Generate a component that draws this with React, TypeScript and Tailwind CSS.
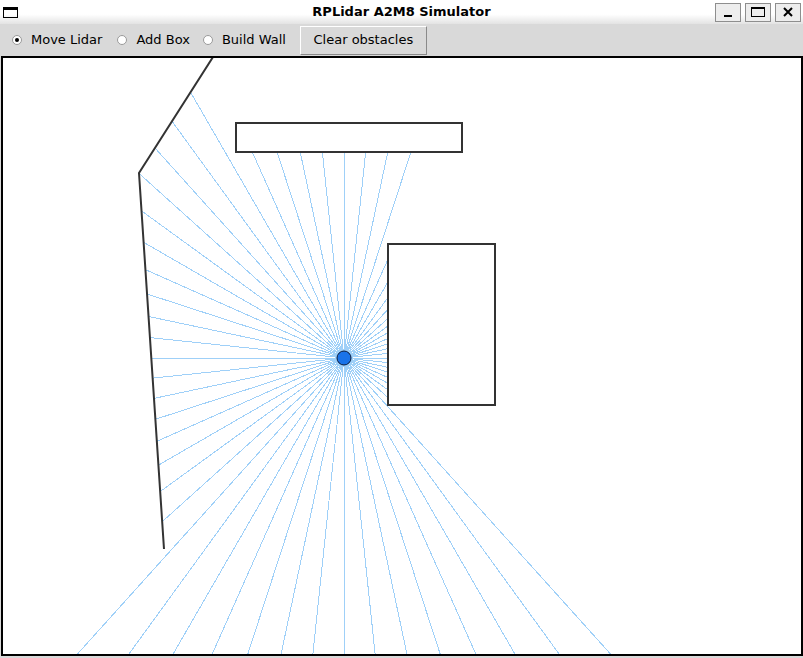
import { FC } from "react";

type Pt = [number, number];
type Seg = [Pt, Pt];

// page coordinates; the canvas inner area starts at (3, 58)
const LIDAR: Pt = [344, 358];
const BOUNDS = { x0: 3, y0: 58, x1: 800, y1: 654 };

const boxes: [number, number, number, number][] = [
  [236, 123, 462, 152],
  [388, 244, 495, 405],
];
const wall: Pt[] = [
  [213, 57],
  [139, 173],
  [164, 549],
];

const boxSegs = (b: [number, number, number, number]): Seg[] => {
  const [x0, y0, x1, y1] = b;
  return [
    [[x0, y0], [x1, y0]],
    [[x1, y0], [x1, y1]],
    [[x1, y1], [x0, y1]],
    [[x0, y1], [x0, y0]],
  ];
};

const segments: Seg[] = [
  ...boxes.flatMap(boxSegs),
  ...wall.slice(1).map((p, i) => [wall[i], p] as Seg),
];

const castRay = (deg: number): Pt => {
  const a = (deg * Math.PI) / 180;
  const dx = Math.cos(a);
  const dy = -Math.sin(a);
  const [px, py] = LIDAR;
  // distance to canvas edge
  let best = Infinity;
  if (dx > 1e-9) best = Math.min(best, (BOUNDS.x1 - px) / dx);
  if (dx < -1e-9) best = Math.min(best, (BOUNDS.x0 - px) / dx);
  if (dy > 1e-9) best = Math.min(best, (BOUNDS.y1 + 1 - py) / dy);
  if (dy < -1e-9) best = Math.min(best, (BOUNDS.y0 - py) / dy);
  for (const [[ax, ay], [bx, by]] of segments) {
    const ex = bx - ax;
    const ey = by - ay;
    const den = dx * ey - dy * ex;
    if (Math.abs(den) < 1e-9) continue;
    const t = ((ax - px) * ey - (ay - py) * ex) / den;
    const u = ((ax - px) * dy - (ay - py) * dx) / den;
    if (t > 0 && u >= 0 && u <= 1 && t < best) best = t;
  }
  return [px + dx * best, py + dy * best];
};

const rays = Array.from({ length: 60 }, (_, i) => castRay(i * 6));

const Radio: FC<{ label: string; checked?: boolean; className?: string }> = ({
  label,
  checked,
  className = "",
}) => (
  <div className={`flex items-center ${className}`}>
    <span className="flex h-[10px] w-[10px] items-center justify-center rounded-full border border-[#9a9a9a] bg-white">
      {checked && <span className="h-[4px] w-[4px] rounded-full bg-black" />}
    </span>
    <span className="ml-[9px]">{label}</span>
  </div>
);

const WinButton: FC<{ kind: "min" | "max" | "close" }> = ({ kind }) => (
  <div className="flex h-[19px] w-[26px] items-center justify-center border border-[#8e8e8e] bg-[#ededed]">
    {kind === "min" && <span className="mt-[8px] h-[2px] w-[8px] bg-black" />}
    {kind === "max" && (
      <span className="h-[10px] w-[14px] border border-t-2 border-black" />
    )}
    {kind === "close" && (
      <svg width="10" height="10" viewBox="0 0 10 10">
        <path d="M1 1 L9 9 M9 1 L1 9" stroke="#000" strokeWidth="2" />
      </svg>
    )}
  </div>
);

export default function App() {
  return (
    <div className="h-[658px] w-[803px] overflow-hidden bg-[#d9d9d9] font-['DejaVu_Sans',sans-serif] text-[13px] text-black">
      {/* title bar */}
      <div className="grid h-[24px] grid-cols-[1fr_auto_1fr] items-center bg-linear-to-b from-white from-60% to-[#e3e3e3]">
        <div className="pl-[3px]">
          <div className="h-[11px] w-[15px] border border-t-[3px] border-black" />
        </div>
        <div className="font-bold">RPLidar A2M8 Simulator</div>
        <div className="flex justify-end gap-[4px] pr-[2px]">
          <WinButton kind="min" />
          <WinButton kind="max" />
          <WinButton kind="close" />
        </div>
      </div>

      {/* toolbar */}
      <div className="flex h-[32px] items-center pl-[12px]">
        <Radio label="Move Lidar" checked />
        <Radio label="Add Box" className="ml-[15px]" />
        <Radio label="Build Wall" className="ml-[13px]" />
        <button className="ml-[14px] flex h-[29px] w-[127px] items-center justify-center border border-t-white border-l-white border-r-[#8a8a8a] border-b-[#8a8a8a] bg-[#d9d9d9]">
          Clear obstacles
        </button>
      </div>

      {/* canvas */}
      <div className="ml-[1px] h-[600px] w-[802px] border-2 border-black bg-white">
        <svg
          width="798"
          height="596"
          viewBox="3 58 798 596"
          className="block overflow-hidden"
        >
          <g stroke="#9fd0f8" strokeWidth="1" shapeRendering="crispEdges">
            {rays.map(([x, y], i) => (
              <line key={i} x1={LIDAR[0]} y1={LIDAR[1]} x2={x} y2={y} />
            ))}
          </g>
          {boxes.map(([x0, y0, x1, y1], i) => (
            <rect
              key={i}
              x={x0}
              y={y0}
              width={x1 - x0}
              height={y1 - y0}
              fill="none"
              stroke="#333"
              strokeWidth="2"
            />
          ))}
          <polyline
            points={wall.map((p) => p.join(",")).join(" ")}
            fill="none"
            stroke="#333"
            strokeWidth="2"
          />
          <circle
            cx={LIDAR[0]}
            cy={LIDAR[1]}
            r="7"
            fill="#1a73e8"
            stroke="#0a1a3a"
            strokeWidth="1"
          />
        </svg>
      </div>
    </div>
  );
}
